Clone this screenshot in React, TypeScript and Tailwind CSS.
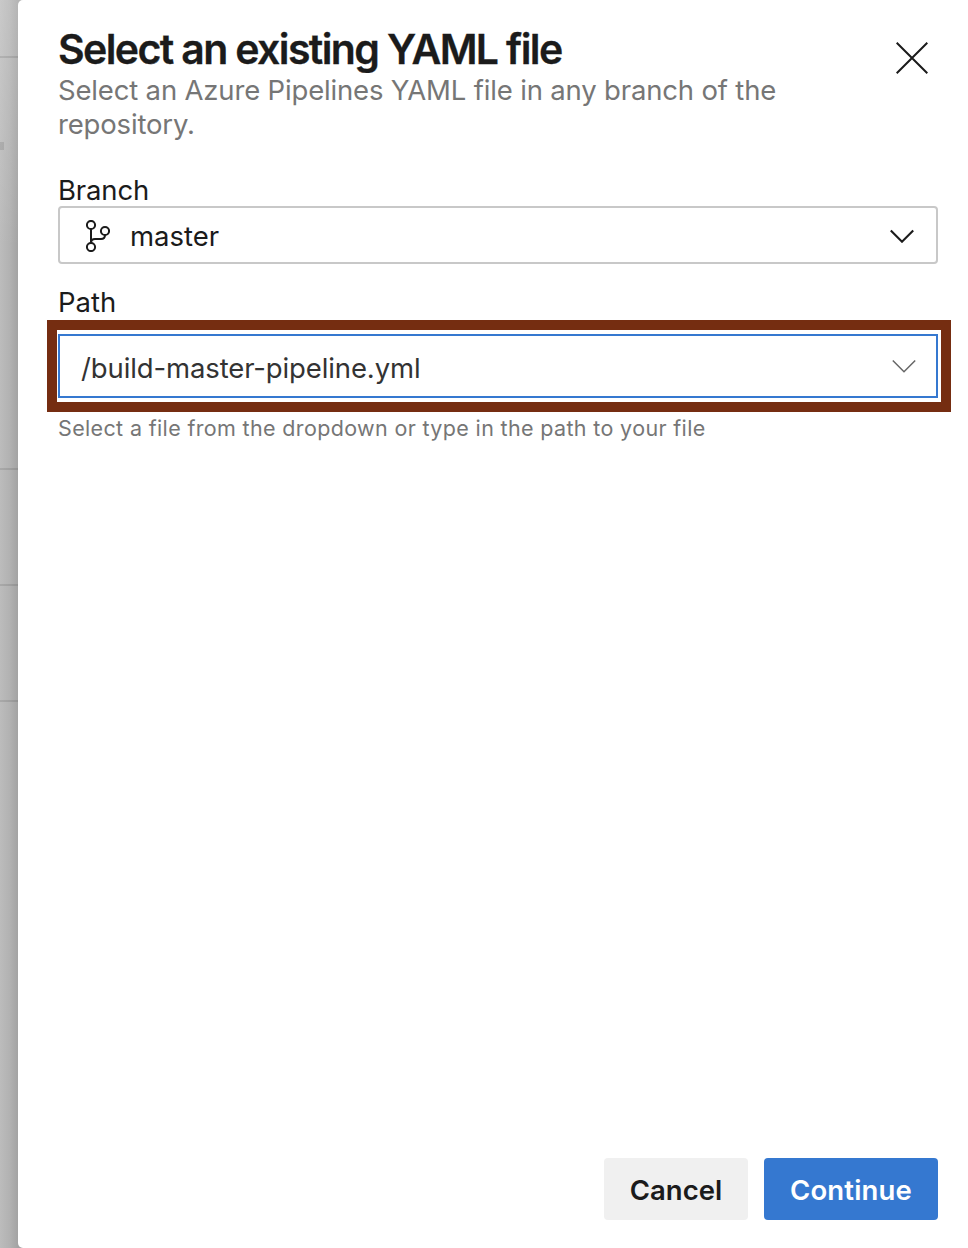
import React from "react";

const dividers = ["h-[412px]", "h-[116px]", "h-[116px]"];

function Backdrop() {
  return (
    <div className="absolute inset-y-0 left-0 w-6 bg-[#bfbfbf] bg-linear-to-r from-[#bcbcbc] via-[#b2b2b2] via-40% to-[#a3a3a3] to-75%">
      <div className="flex h-full flex-col bg-linear-to-b from-white/20 to-transparent to-20%">
        <div className="h-[58px] border-b-2 border-black/10" />
        {dividers.map((height, i) => (
          <div key={i} className={`${height} border-b-2 border-black/10`} />
        ))}
      </div>
      <div className="absolute left-0 top-[142px] h-2 w-1 bg-black/10" />
    </div>
  );
}

function BranchIcon() {
  return (
    <svg className="mt-0.5 h-8 w-6" viewBox="0 0 24 32" fill="none" stroke="#1b1b1b" strokeWidth="2">
      <circle cx="5" cy="5" r="4.1" />
      <circle cx="5" cy="27" r="4.1" />
      <circle cx="19" cy="11" r="4.1" />
      <path d="M5 9v14M5 23c0-2.700 1.300-4 4-4h6c2.500 0 4-1.500 4-4" />
    </svg>
  );
}

function Chevron({ className, width }: { className: string; width: number }) {
  return (
    <svg className={`h-3.5 w-[26px] ${className}`} viewBox="0 0 26 14" fill="none" stroke="currentColor" strokeWidth={width}>
      <path d="M1.800 1.500 13 12.700l11.200-11.200" />
    </svg>
  );
}

export default function App() {
  return (
    <div className="relative h-[1248px] w-[968px] overflow-hidden pl-[18px] font-['Inter',sans-serif] text-[27.5px] text-[#1b1b1b]">
      <Backdrop />
      <section className="relative flex h-full flex-col rounded-l-[5px] bg-white pl-10 pr-[30px]">
        <header className="flex justify-between pt-[26px]">
          <div>
            <h1 className="text-[41px] font-semibold leading-[47px] tracking-[-1.620px] [-webkit-text-stroke:0.3px_#1b1b1b]">
              Select an existing YAML file
            </h1>
            <p className="w-[740px] leading-[34px] tracking-[-0.17px] text-[#767676]">
              Select an Azure Pipelines YAML file in any branch of the repository.
            </p>
          </div>
          <button aria-label="Close" className="mr-2.5 mt-4 h-8 w-8">
            <svg viewBox="0 0 32 32" fill="none" stroke="#1b1b1b" strokeWidth="2">
              <path d="m.7.7 30.600 30.600M31.300.7.700 31.300" />
            </svg>
          </button>
        </header>

        <label className="mt-[33px] leading-8 tracking-[-0.15px]">Branch</label>
        <button className="flex h-[58px] items-center rounded-[4px] border-2 border-[#c8c8c8] pl-[26px] pr-[21px] text-left">
          <BranchIcon />
          <span className="ml-5 flex-1 pt-1">master</span>
          <Chevron className="mt-0.5" width={2.1} />
        </button>

        <label className="mt-[22px] leading-8">Path</label>
        <div className="-ml-[11px] -mr-[13px] mt-0.5 h-[92px] border-10 border-[#752d11] py-1 pl-px pr-[3px]">
          <div className="flex h-16 items-center border-2 border-[#3578d0] pl-[21px] pr-[19px] text-[#333]">
            <span className="flex-1 pt-1.5 tracking-[-0.12px]">/build-master-pipeline.yml</span>
            <Chevron className="text-[#666]" width={1.5} />
          </div>
        </div>
        <p className="mt-0.5 text-[21.500px] leading-7 tracking-[0.35px] text-[#767676]">
          Select a file from the dropdown or type in the path to your file
        </p>

        <footer className="mb-7 mt-auto flex justify-end gap-4 font-semibold">
          <button className="h-[62px] w-36 rounded-[4px] bg-[#f0f0f0] pt-1">Cancel</button>
          <button className="h-[62px] w-[174px] rounded-[4px] bg-[#3578d0] pt-1 tracking-[0.15px] text-white">Continue</button>
        </footer>
      </section>
    </div>
  );
}
